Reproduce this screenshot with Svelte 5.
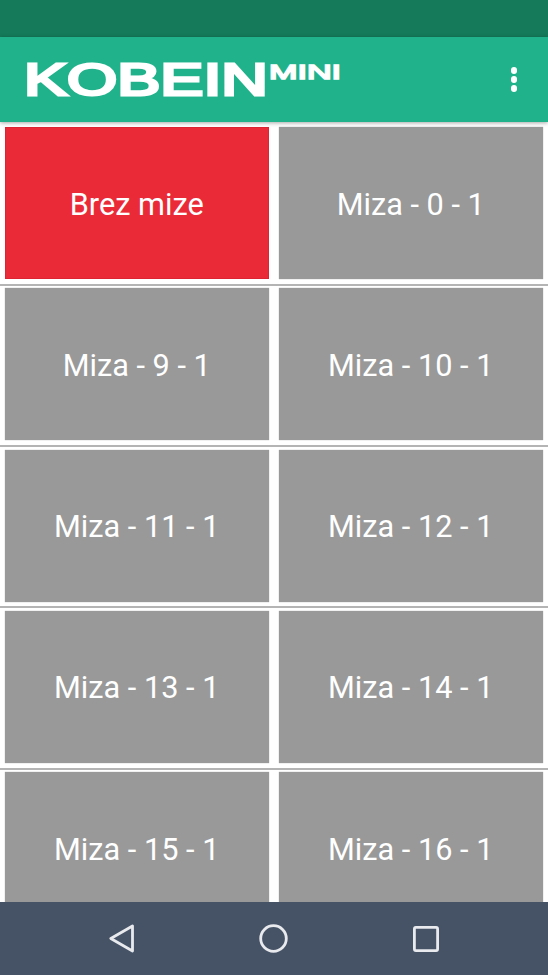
<script>
  const rows = [
    [{ label: 'Brez mize', active: true }, { label: 'Miza - 0 - 1' }],
    [{ label: 'Miza - 9 - 1' }, { label: 'Miza - 10 - 1' }],
    [{ label: 'Miza - 11 - 1' }, { label: 'Miza - 12 - 1' }],
    [{ label: 'Miza - 13 - 1' }, { label: 'Miza - 14 - 1' }],
    [{ label: 'Miza - 15 - 1' }, { label: 'Miza - 16 - 1' }]
  ];
</script>

<div class="app">
  <div class="status"></div>
  <header class="toolbar">
    <svg class="logo" width="320" height="58" viewBox="0 0 320 58" role="img" aria-label="KOBEIN MINI">
      <text x="-2" y="44.2" textLength="244" lengthAdjust="spacingAndGlyphs" class="big">KOBEIN</text>
      <text x="243" y="27.9" textLength="72" lengthAdjust="spacingAndGlyphs" class="small">MINI</text>
    </svg>
    <div class="menu"><span></span><span></span><span></span></div>
  </header>
  <main class="list">
    {#each rows as row}
      <div class="row">
        {#each row as cell}
          <button class="cell" class:active={cell.active}>{cell.label}</button>
        {/each}
      </div>
    {/each}
  </main>
  <nav class="nav">
    <svg width="25" height="29" viewBox="0 0 25 29"><path d="M1.8 14.5 L23.5 2 V27 Z" fill="none" stroke="#e8eaee" stroke-width="2.8" stroke-linejoin="round"/></svg>
    <svg width="29" height="29" viewBox="0 0 29 29"><circle cx="14.5" cy="14.5" r="12.8" fill="none" stroke="#e8eaee" stroke-width="2.8"/></svg>
    <svg width="26" height="26" viewBox="0 0 26 26"><rect x="1.4" y="1.4" width="23.2" height="23.2" rx="1.5" fill="none" stroke="#e8eaee" stroke-width="2.8"/></svg>
  </nav>
</div>

<style>
  :global(body) { margin: 0; background: #fff; }
  .app {
    width: 548px;
    height: 975px;
    display: flex;
    flex-direction: column;
    overflow: hidden;
    font-family: Roboto, sans-serif;
  }
  .status { height: 37px; background: #147a59; flex: none; }
  .toolbar {
    height: 85px;
    flex: none;
    background: #20b28a;
    display: flex;
    align-items: center;
    justify-content: space-between;
    padding: 0 31px 0 26px;
    box-shadow: 0 1px 4px rgba(0, 0, 0, 0.35);
    position: relative;
    z-index: 1;
    box-sizing: border-box;
  }
  .logo { display: block; overflow: visible; }
  .big {
    font: 400 45px "Liberation Sans", sans-serif;
    fill: #fff;
    stroke: #fff;
    stroke-width: 2.9px;
  }
  .small {
    font: 400 21px "Liberation Sans", sans-serif;
    fill: #fff;
    stroke: #fff;
    stroke-width: 1.6px;
  }
  .menu { display: flex; flex-direction: column; gap: 2.5px; }
  .menu span { width: 6.5px; height: 6.5px; border-radius: 50%; background: #fff; }
  .list { flex: 1; min-height: 0; overflow: hidden; padding-top: 5px; }
  .row {
    display: grid;
    grid-template-columns: 264.5px 264.5px;
    column-gap: 9.5px;
    padding: 0 5px 0 4.5px;
    height: 161.25px;
    box-sizing: border-box;
    position: relative;
  }
  .row::after {
    content: "";
    position: absolute;
    left: 0;
    right: 0;
    bottom: 2.5px;
    height: 2px;
    background: #b4b4b4;
  }
  .cell {
    border: 0;
    margin: 0;
    padding: 2px 0 0;
    height: 152px;
    background: #999;
    color: #fff;
    font: 400 30.7px Roboto, sans-serif;
    box-shadow: 0 0 1px #a8a8a8;
  }
  .cell.active {
    background: #eb2a38;
    box-shadow: inset 0 0 0 1px #dc2432;
  }
  .nav {
    height: 73px;
    flex: none;
    background: #465367;
    position: relative;
    z-index: 1;
    display: flex;
    align-items: center;
    justify-content: space-between;
    padding: 0 109px;
    box-sizing: border-box;
  }
</style>
